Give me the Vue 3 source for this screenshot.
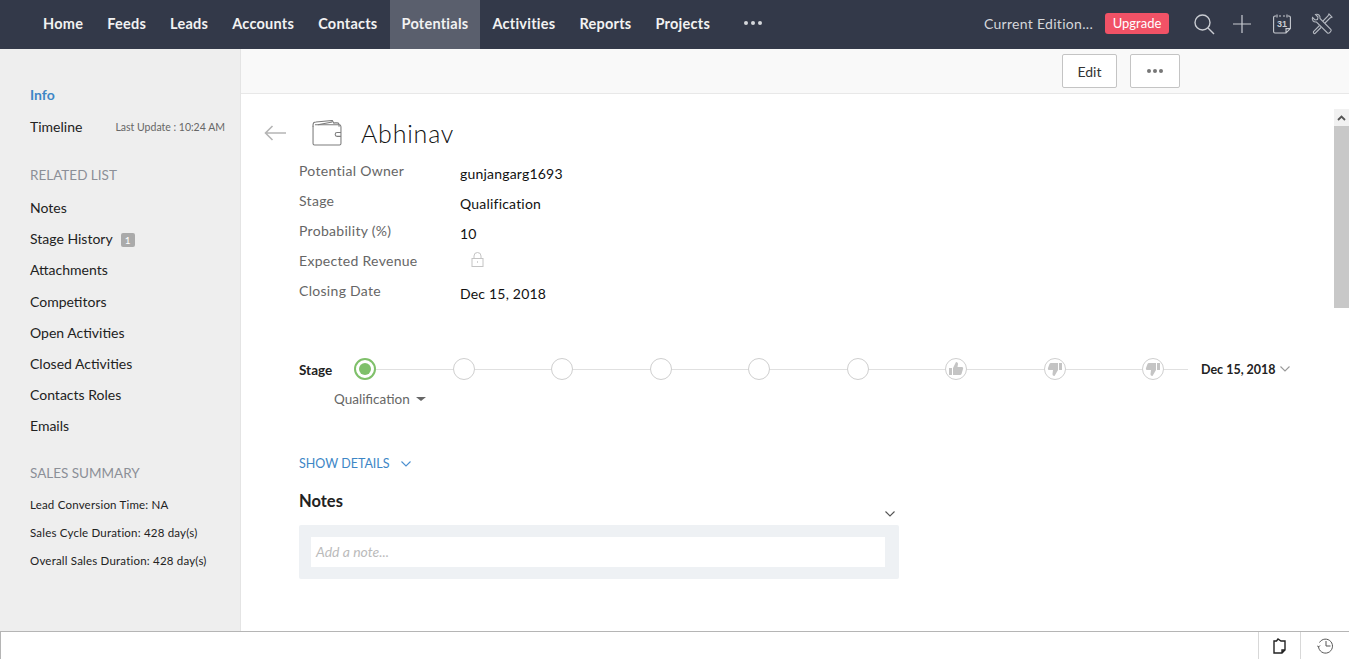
<template>
  <div class="app">
    <header class="topbar">
      <nav class="nav">
        <a v-for="item in navItems" :key="item" class="nav-item" :class="{ active: item === 'Potentials' }">{{ item }}</a>
        <span class="nav-more"><i></i><i></i><i></i></span>
      </nav>
      <div class="top-right">
        <span class="edition">Current Edition...</span>
        <span class="upgrade">Upgrade</span>
        <svg class="top-icon search" width="22" height="22" viewBox="0 0 22 22" fill="none" stroke="#c9ccd2" stroke-width="1.4"><circle cx="9.5" cy="9.5" r="7.5"/><path d="M15 15l6 6"/></svg>
        <svg class="top-icon plus" width="18" height="18" viewBox="0 0 18 18" fill="none" stroke="#c9ccd2" stroke-width="1.2"><path d="M9 0v18M0 9h18"/></svg>
        <svg class="top-icon cal" width="18" height="20" viewBox="0 0 18 20" fill="none" stroke="#c9ccd2" stroke-width="1.1"><path d="M3 2H2a1.400 1.400 0 0 0-1.400 1.400v14.200A1.400 1.400 0 0 0 2 19h11l4.400-4.400V3.400A1.400 1.400 0 0 0 16 2h-1M6 2h2M10 2h2M4 .5v3M14 .5v3M13 19v-4.400h4.400"/><text x="9" y="13" text-anchor="middle" font-size="9" font-weight="700" stroke="none" fill="#c9ccd2" font-family="Liberation Sans, sans-serif">31</text></svg>
        <svg class="top-icon tools" width="22" height="22" viewBox="0 0 22 22" fill="none" stroke="#b4b8c0" stroke-width="1.100"><path d="M1.500 4.500L4 7l2.500-.5L7 4 4.500 1.500C7 .5 9.500 2.500 9 5.500l11 11c1 1.500-2 4.500-3.500 3.500l-11-11C2.500 9.500.5 7 1.500 4.500z"/><path d="M12 8l5-5 1-2 3 3-2 1-5 5M8.500 12.500l-6 6c-.5 1 .5 2.500 1.500 2l6-6"/></svg>
      </div>
    </header>

    <div class="body">
      <aside class="sidebar">
        <a class="side-link info">Info</a>
        <div class="timeline-row">
          <a class="side-link">Timeline</a>
          <span class="last-update">Last Update : 10:24 AM</span>
        </div>
        <h4 class="side-title related">RELATED LIST</h4>
        <ul class="related-list">
          <li v-for="r in relatedList" :key="r">
            {{ r }}<span v-if="r === 'Stage History'" class="count">1</span>
          </li>
        </ul>
        <h4 class="side-title summary">SALES SUMMARY</h4>
        <ul class="summary-list">
          <li v-for="s in summary" :key="s">{{ s }}</li>
        </ul>
      </aside>

      <main class="main">
        <div class="toolbar">
          <button class="btn edit">Edit</button>
          <button class="btn more"><i></i><i></i><i></i></button>
        </div>
        <div class="scroll-wrap">
          <div class="content">
            <div class="title-row">
              <svg class="back" width="23" height="16" viewBox="0 0 23 16" fill="none" stroke="#b5b5b5" stroke-width="1.600"><path d="M22 8H1.500M8.500 1L1.500 8l7 7"/></svg>
              <svg class="wallet" width="30" height="26" viewBox="0 0 31 27" fill="none" stroke="#7c7c7c" stroke-width="1.100"><path d="M1 7V5a3 3 0 0 1 3-3h0l17-1.500 2 3.500M6 5l15-3M23 3h3a2 2 0 0 1 2 2v2"/><path d="M3 5h25a2 2 0 0 1 2 2v17.500a1.500 1.500 0 0 1-1.500 1.500H2.500A1.500 1.500 0 0 1 1 24.500V6"/><path d="M30 13h-4a2 2 0 0 0 0 4h4"/></svg>
              <h1 class="name">Abhinav</h1>
            </div>

            <dl class="fields">
              <template v-for="f in fields" :key="f.label">
                <dt>{{ f.label }}</dt>
                <dd>
                  <svg v-if="f.locked" class="lock" width="13" height="15" viewBox="0 0 13 15" fill="none" stroke="#c4c4c4"><rect x="1" y="6.500" width="11" height="8"/><path d="M3 6.500V4a3.500 3.500 0 0 1 7 0v2.500"/><path d="M6 10h1" stroke-width="1.500"/></svg>
                  <template v-else>{{ f.value }}</template>
                </dd>
              </template>
            </dl>

            <div class="stage-row">
              <span class="stage-label">Stage</span>
              <div class="track">
                <span v-for="n in 6" :key="n" class="dot" :class="{ current: n === 1 }"></span>
                <span class="dot">
                  <svg width="16" height="16" viewBox="0 0 16 16" fill="#c4c4c4"><rect x="1" y="7" width="3" height="7"/><path d="M5 7l3-6c1.500 0 2 1 2 2l-.5 3H14c1 0 1.500 1 1 2l-1.500 5c-.2.700-.7 1-1.500 1H5z"/></svg>
                </span>
                <span v-for="n in 2" :key="'d' + n" class="dot">
                  <svg width="16" height="16" viewBox="0 0 16 16" fill="#c4c4c4"><rect x="12" y="2" width="3" height="7"/><path d="M11 2H4c-.8 0-1.300.3-1.500 1L1 7c-.3 1 0 2 1 2h4l-.5 4c0 1 .5 2 2 2l3.500-6z"/></svg>
                </span>
              </div>
              <span class="stage-date">Dec 15, 2018</span>
              <svg class="chev" width="10" height="6" viewBox="0 0 10 6" fill="none" stroke="#999" stroke-width="1.100"><path d="M.5.500L5 5 9.500.500"/></svg>
            </div>
            <div class="stage-select">Qualification<span class="caret"></span></div>

            <div class="show-details">
              SHOW DETAILS
              <svg width="10" height="6" viewBox="0 0 10 6" fill="none" stroke="#4a8fd0" stroke-width="1.100"><path d="M.5.500L5 5 9.500.500"/></svg>
            </div>

            <section class="notes">
              <h3>Notes</h3>
              <div class="notes-chev">
                <svg width="10" height="6" viewBox="0 0 10 6" fill="none" stroke="#555" stroke-width="1.100"><path d="M.5.500L5 5 9.500.500"/></svg>
              </div>
              <div class="note-box">
                <div class="note-input">Add a note...</div>
              </div>
            </section>
          </div>
          <div class="scrollbar">
            <div class="sb-up">
              <svg width="9" height="6" viewBox="0 0 9 6" fill="none" stroke="#555" stroke-width="1.800"><path d="M1 5l3.500-3.500L8 5"/></svg>
            </div>
            <div class="sb-thumb"></div>
          </div>
        </div>
      </main>
    </div>

    <footer class="bottombar">
      <div class="bottom-cell">
        <svg width="13" height="16" viewBox="0 0 13 16" fill="none" stroke="#222" stroke-width="1.400"><path d="M1 3h2.500L5 1l3 2h4v9l-3 3H1zM9 15v-3h3"/></svg>
      </div>
      <div class="bottom-cell wide">
        <svg width="17" height="17" viewBox="0 0 17 17" fill="none" stroke="#555" stroke-width="1"><path d="M2.500 5.500a7 7 0 1 1-1 4"/><path d="M9 4v5h4.500M0 8.500l1.500 1.500L3 8.500"/></svg>
      </div>
    </footer>
  </div>
</template>

<script setup>
const navItems = ['Home', 'Feeds', 'Leads', 'Accounts', 'Contacts', 'Potentials', 'Activities', 'Reports', 'Projects']

const relatedList = [
  'Notes',
  'Stage History',
  'Attachments',
  'Competitors',
  'Open Activities',
  'Closed Activities',
  'Contacts Roles',
  'Emails'
]

const summary = [
  'Lead Conversion Time: NA',
  'Sales Cycle Duration: 428 day(s)',
  'Overall Sales Duration: 428 day(s)'
]

const fields = [
  { label: 'Potential Owner', value: 'gunjangarg1693' },
  { label: 'Stage', value: 'Qualification' },
  { label: 'Probability (%)', value: '10' },
  { label: 'Expected Revenue', locked: true },
  { label: 'Closing Date', value: 'Dec 15, 2018' }
]
</script>

<style>
html, body { margin: 0; overflow: hidden; }
</style>

<style scoped>
.app { height: 100vh; display: flex; flex-direction: column; font-family: Lato, "Open Sans", sans-serif; font-size: 14px; color: #222; overflow: hidden; }

.topbar { height: 49px; flex: none; background: #333949; display: flex; justify-content: space-between; color: #fff; }
.nav { display: flex; padding-left: 31px; }
.nav-item { display: flex; align-items: center; padding: 0 12px 2px; font-size: 14.5px; font-weight: 700; color: #f2f2f2; letter-spacing: .25px; }
.nav-item.active { background: #5a5f6d; }
.nav-more { display: flex; align-items: center; gap: 2px; margin: -3px 0 0 22px; }
.nav-more i { width: 4px; height: 4px; border-radius: 50%; background: #d5d7db; margin-right: 1px; }
.top-right { display: flex; align-items: center; padding-right: 16px; }
.edition { font-size: 14px; color: #d5d7db; letter-spacing: .3px; margin-right: 12px; padding-bottom: 2px; }
.upgrade { width: 64px; height: 21px; margin: -3px 0 0; line-height: 21px; text-align: center; background: #f15266; border-radius: 3px; font-size: 13px; color: #fff; }
.top-icon { flex: none; margin-top: -2px; }
.search { margin-left: 24px; }
.plus { margin-left: 18px; }
.cal { margin-left: 22px; }
.tools { margin-left: 20px; }

.body { flex: 1; display: flex; min-height: 0; }
.sidebar { flex: none; background: #eee; border-right: 1px solid #e4e4e4; padding: 37px 0 0 30px; box-sizing: border-box; width: 241px; font-size: 14px; }
.side-link { display: block; line-height: 18px; color: #222; }
.info { color: #3d86c6; font-weight: 700; }
.timeline-row { display: flex; justify-content: space-between; align-items: center; margin-top: 14px; padding-right: 15px; }
.last-update { font-size: 10.5px; color: #666; }
.side-title { margin: 0; font-weight: 400; font-size: 13.5px; line-height: 18px; color: #8b8f97; }
.related { margin-top: 30px; }
.summary { margin-top: 23px; }
ul { list-style: none; margin: 0; padding: 0; }
.related-list { margin-top: 8.2px; }
.related-list li { height: 31.15px; line-height: 31.15px; }
.count { display: inline-block; width: 14px; height: 14px; line-height: 14px; text-align: center; margin-left: 8px; background: #aaa; color: #fff; border-radius: 2px; font-size: 10px; vertical-align: 0; }
.summary-list { margin-top: 9px; font-size: 11.5px; letter-spacing: .2px; }
.summary-list li { height: 28px; line-height: 28px; }

.main { flex: 1; min-width: 0; display: flex; flex-direction: column; }
.toolbar { height: 45px; flex: none; box-sizing: border-box; background: #f9f9f9; border-bottom: 1px solid #e8e8e8; display: flex; justify-content: flex-end; align-items: flex-start; padding: 5px 169px 0 0; }
.btn { box-sizing: border-box; height: 34px; background: #fff; border: 1px solid #c4c4c4; border-radius: 2px; font-family: inherit; font-size: 14px; color: #333; padding: 0; }
.edit { width: 55px; }
.more { width: 50px; margin-left: 13px; display: flex; justify-content: center; align-items: center; gap: 2px; }
.more i { width: 4px; height: 4px; border-radius: 50%; background: #777; }

.scroll-wrap { flex: 1; min-height: 0; display: flex; }
.content { flex: 1; min-width: 0; padding: 0 0 0 23px; overflow: hidden; }
.title-row { display: flex; align-items: center; height: 40px; margin-top: 19px; }
.back { flex: none; }
.wallet { flex: none; margin-left: 25px; }
.name { margin: 0 0 0 19px; font-size: 25px; font-weight: 300; color: #111; letter-spacing: .8px; line-height: 40px; }

.fields { display: grid; grid-template-columns: 161px 1fr; grid-auto-rows: 30px; margin: 9px 0 0 35px; }
.fields dt { line-height: 18px; color: #666; letter-spacing: .3px; }
.fields dd { margin: 3px 0 0; line-height: 18px; color: #111; letter-spacing: .2px; }
.lock { margin: -3px 0 0 11px; display: block; }

.stage-row { display: flex; align-items: center; height: 22px; margin: 46px 0 0 35px; }
.stage-label { width: 55px; font-weight: 700; font-size: 13.5px; color: #222; padding-top: 2px; }
.track { position: relative; width: 834px; box-sizing: border-box; padding-right: 24px; display: flex; justify-content: space-between; }
.track::before { content: ""; position: absolute; left: 0; right: 0; top: 11px; height: 1px; background: #e0e0e0; }
.dot { position: relative; box-sizing: border-box; width: 22px; height: 22px; border: 1px solid #cfcfcf; border-radius: 50%; background: #fff; display: flex; align-items: center; justify-content: center; }
.dot svg { width: 16px; height: 16px; }
.dot.current { border: 2px solid #7fc06a; }
.dot.current::after { content: ""; width: 12px; height: 12px; border-radius: 50%; background: #7fc06a; }
.stage-date { margin-left: 13px; font-weight: 700; font-size: 12.5px; color: #222; white-space: nowrap; }
.chev { margin-left: 4px; flex: none; }
.stage-select { margin: 10px 0 0 70px; line-height: 18px; font-size: 13.5px; color: #666; display: flex; align-items: center; }
.caret { width: 0; height: 0; margin-left: 6px; border: 5px solid transparent; border-top: 4px solid #666; border-bottom: 0; }

.show-details { margin: 47px 0 0 35px; line-height: 18px; font-size: 12.5px; color: #3d86c6; display: flex; align-items: center; gap: 11px; }
.notes { width: 600px; margin: 18px 0 0 35px; }
.notes h3 { margin: 0; font-size: 16.5px; font-weight: 700; line-height: 20px; color: #222; }
.notes-chev { display: flex; justify-content: flex-end; height: 14px; padding: 0 4px 0 0; margin-top: -4px; align-items: center; }
.note-box { box-sizing: border-box; height: 54px; background: #eef1f4; border-radius: 2px; padding: 12px 14px 12px 12px; margin-top: 4px; }
.note-input { height: 30px; line-height: 30px; background: #fff; padding-left: 5px; font-style: italic; color: #bbb; }

.scrollbar { width: 15px; flex: none; background: #fff; margin-top: 15px; }
.sb-up { height: 17px; background: #f1f1f1; display: flex; align-items: center; justify-content: center; }
.sb-thumb { height: 182px; background: #c8c8c8; }

.bottombar { height: 28px; flex: none; box-sizing: border-box; border-top: 1px solid #b5b5b5; border-left: 1px solid #b5b5b5; background: #fff; display: flex; justify-content: flex-end; }
.bottom-cell { width: 41px; border-left: 1px solid #d8d8d8; display: flex; align-items: center; justify-content: center; }
.bottom-cell.wide { width: 48px; }
</style>
